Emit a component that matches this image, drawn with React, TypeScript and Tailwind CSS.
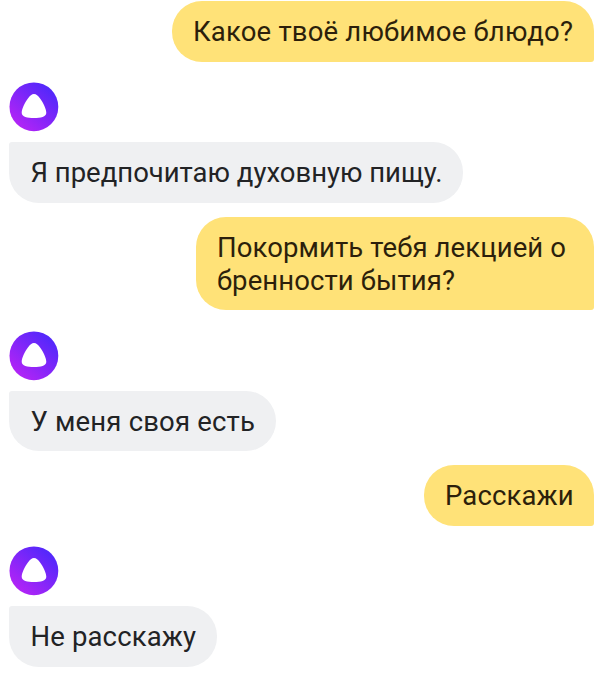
type Message = { from: "alice" | "user"; text: string; className: string };

const messages: Message[] = [
  { from: "user", text: "Какое твоё любимое блюдо?", className: "mt-px w-[422px] pb-[14px] tracking-[0.18px]" },
  { from: "alice", text: "Я предпочитаю духовную пищу.", className: "w-[454px] pb-[14px] tracking-[-0.01px]" },
  { from: "user", text: "Покормить тебя лекцией о\nбренности бытия?", className: "mt-3.5 mb-px w-[398px] pb-[13px] tracking-[0.1px]" },
  { from: "alice", text: "У меня своя есть", className: "w-[267px] pb-[13px] tracking-[0.18px]" },
  { from: "user", text: "Расскажи", className: "mt-3.5 w-[170px] pb-[14px] tracking-[0.14px]" },
  { from: "alice", text: "Не расскажу", className: "w-[208px] pb-[14px] tracking-[0.14px]" },
];

function AliceLogo() {
  return (
    <svg viewBox="0 0 50 50" className="mt-5 mb-2.5 block size-[50px]">
      <defs>
        <linearGradient id="alice" x1="0.15" y1="0.9" x2="0.85" y2="0.1">
          <stop offset="0" stopColor="#b424f6" />
          <stop offset="1" stopColor="#4f28fb" />
        </linearGradient>
      </defs>
      <circle cx="24.9" cy="24.8" r="24.4" fill="url(#alice)" />
      <path
        d="M25 11.9C22.8 11.9 20.9 13.8 19.1 16.2C15.8 20.6 12.7 26.8 12.7 30.8C12.7 34.8 18.3 36.1 25 36.1S37.3 34.8 37.3 30.8C37.3 26.8 34.2 20.6 30.9 16.2C29.1 13.8 27.2 11.9 25 11.9Z"
        fill="#fff"
      />
    </svg>
  );
}

function Bubble({ message }: { message: Message }) {
  const mine = message.from === "user";
  const color = mine
    ? "self-end rounded-[30px] rounded-br-[3px] bg-[#ffe278] px-[21px] text-[#2c1f0b]"
    : "rounded-[30px] rounded-tl-[3px] bg-[#eff0f2] px-[21.5px] text-[#222325]";

  return (
    <div className={`${color} ${message.className} pt-[14px] text-[27.5px] leading-[33px] whitespace-pre`}>
      {message.text}
    </div>
  );
}

export default function App() {
  return (
    <main className="flex h-[680px] w-[609px] flex-col overflow-hidden bg-white pr-[15px] pl-[9px] font-['Roboto',sans-serif]">
      {messages.map((message) => (
        <div key={message.text} className="flex flex-col">
          {message.from === "alice" && <AliceLogo />}
          <Bubble message={message} />
        </div>
      ))}
    </main>
  );
}
